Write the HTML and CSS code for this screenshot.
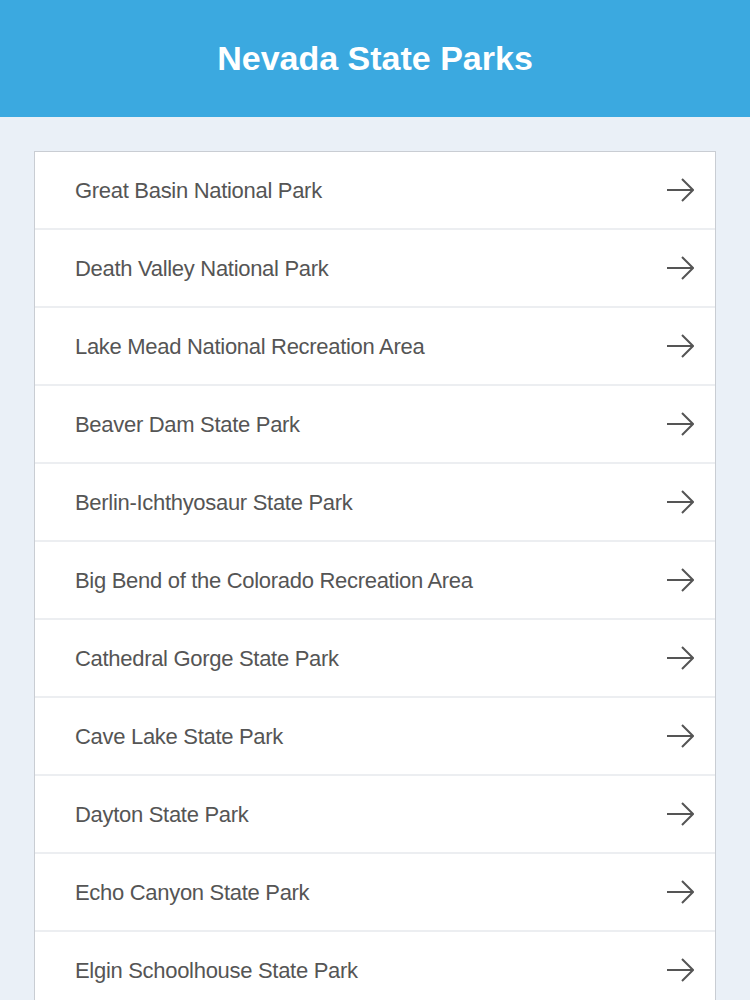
FILE: index.html
```html
<!DOCTYPE html>
<html>
<head>
<meta charset="utf-8">
<link rel="stylesheet" href="styles.css">
</head>
<body>
<header class="topbar"><h1 class="title">Nevada State Parks</h1></header>
<main class="content">
  <ul class="list">
    <li class="row"><span class="name">Great Basin National Park</span><svg class="arrow" viewBox="0 0 28 24"><path d="M1 12H27M16 1L27 12L16 23"/></svg></li>
    <li class="row"><span class="name">Death Valley National Park</span><svg class="arrow" viewBox="0 0 28 24"><path d="M1 12H27M16 1L27 12L16 23"/></svg></li>
    <li class="row"><span class="name">Lake Mead National Recreation Area</span><svg class="arrow" viewBox="0 0 28 24"><path d="M1 12H27M16 1L27 12L16 23"/></svg></li>
    <li class="row"><span class="name">Beaver Dam State Park</span><svg class="arrow" viewBox="0 0 28 24"><path d="M1 12H27M16 1L27 12L16 23"/></svg></li>
    <li class="row"><span class="name">Berlin-Ichthyosaur State Park</span><svg class="arrow" viewBox="0 0 28 24"><path d="M1 12H27M16 1L27 12L16 23"/></svg></li>
    <li class="row"><span class="name">Big Bend of the Colorado Recreation Area</span><svg class="arrow" viewBox="0 0 28 24"><path d="M1 12H27M16 1L27 12L16 23"/></svg></li>
    <li class="row"><span class="name">Cathedral Gorge State Park</span><svg class="arrow" viewBox="0 0 28 24"><path d="M1 12H27M16 1L27 12L16 23"/></svg></li>
    <li class="row"><span class="name">Cave Lake State Park</span><svg class="arrow" viewBox="0 0 28 24"><path d="M1 12H27M16 1L27 12L16 23"/></svg></li>
    <li class="row"><span class="name">Dayton State Park</span><svg class="arrow" viewBox="0 0 28 24"><path d="M1 12H27M16 1L27 12L16 23"/></svg></li>
    <li class="row"><span class="name">Echo Canyon State Park</span><svg class="arrow" viewBox="0 0 28 24"><path d="M1 12H27M16 1L27 12L16 23"/></svg></li>
    <li class="row"><span class="name">Elgin Schoolhouse State Park</span><svg class="arrow" viewBox="0 0 28 24"><path d="M1 12H27M16 1L27 12L16 23"/></svg></li>
  </ul>
</main>
</body>
</html>
```
FILE: styles.css
```css
html, body {
  margin: 0;
  padding: 0;
  background: #eaf0f7;
  font-family: "Liberation Sans", Arial, sans-serif;
}
.topbar {
  height: 117px;
  background: #3ba9e0;
  display: flex;
  align-items: center;
  justify-content: center;
}
.title {
  margin: 0;
  color: #ffffff;
  font-size: 34px;
  font-weight: bold;
  letter-spacing: 0;
}
.content {
  padding: 34px 34px 0 34px;
}
.list {
  list-style: none;
  margin: 0;
  padding: 0;
  background: #ffffff;
  border: 1px solid #c9cdd3;
  border-bottom: none;
}
.row {
  height: 76px;
  display: flex;
  align-items: center;
  justify-content: space-between;
  padding: 0 21px 0 40px;
  border-bottom: 2px solid #eceef1;
}
.name {
  font-size: 22px;
  letter-spacing: -0.3px;
  color: #555555;
  padding-top: 2px;
}
.arrow {
  width: 28px;
  height: 24px;
  fill: none;
  stroke: #555555;
  stroke-width: 2;
}
```
